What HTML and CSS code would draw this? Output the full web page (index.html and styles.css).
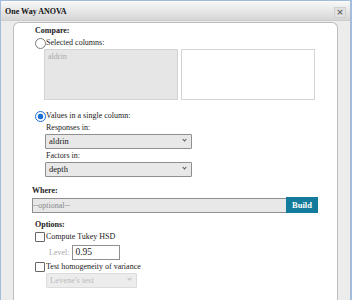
FILE: index.html
```html
<!DOCTYPE html>
<html lang="en">

<head>
    <meta charset="UTF-8">
    <title>One Way ANOVA</title>
    <link rel="stylesheet" href="styles.css">
</head>

<body>
    <div class="dialog">
        <div class="titlebar">
            <span class="title">One Way ANOVA</span>
            <span class="close">&times;</span>
        </div>
        <div class="content">
            <div class="panel">
                <div class="section compare">
                    <div class="label">Compare:</div>
                    <div class="option">
                        <span class="radio"></span>Selected columns:
                    </div>
                    <div class="lists">
                        <div class="list source">aldrin</div>
                        <div class="list target"></div>
                    </div>
                    <div class="option single">
                        <span class="radio checked"></span>Values in a single column:
                    </div>
                    <div class="sub">
                        <div class="sublabel">Responses in:</div>
                        <div class="select">aldrin<span class="chev"></span></div>
                        <div class="sublabel second">Factors in:</div>
                        <div class="select">depth<span class="chev"></span></div>
                    </div>
                </div>

                <div class="section where">
                    <div class="label">Where:</div>
                    <div class="where-row">
                        <div class="where-input">--optional--</div>
                        <button class="build">Build</button>
                    </div>
                </div>

                <div class="section options">
                    <div class="label">Options:</div>
                    <div class="option">
                        <span class="check"></span>Compute Tukey HSD
                    </div>
                    <div class="level">
                        <span class="muted">Level:</span>
                        <span class="level-input">0.95</span>
                    </div>
                    <div class="option test">
                        <span class="check"></span>Test homogeneity of variance
                    </div>
                    <div class="select disabled">Levene's test<span class="chev"></span></div>
                </div>
            </div>
        </div>
    </div>
</body>

</html>
```

FILE: styles.css
```css
* {
    margin: 0px;
    box-sizing: border-box;
}

body {
    font-family: "Liberation Serif", "Times New Roman", serif;
    font-size: 8px;
    color: #222;
    background: #fff;
}

.dialog {
    width: 352px;
    height: 300px;
    border: 1px solid #a3bcdc;
    border-right-width: 2px;
    border-bottom: none;
    overflow: hidden;
    background: #ececec;
}

.titlebar {
    height: 20px;
    display: flex;
    align-items: center;
    justify-content: space-between;
    padding: 0 4px 0 4px;
    background: linear-gradient(#f7f7f7, #d6d6d6);
    border-top: 1px solid #fafafa;
    border-bottom: 1px solid #cdcdcd;
}

.title {
    font-weight: bold;
    font-size: 8px;
    color: #111;
}

.close {
    width: 12px;
    height: 11px;
    margin-top: 2px;
    border: 1px solid #d0d0d0;
    background: #e2e2e2;
    color: #6a6a6a;
    font-family: "DejaVu Sans", sans-serif;
    font-size: 9px;
    line-height: 9px;
    text-align: center;
    font-weight: bold;
}

.content {
    height: 280px;
    padding: 1px 12px 0 12px;
}

.panel {
    height: 100%;
    background: #fff;
    border: 1px solid #bdbdbd;
    border-bottom: none;
    border-radius: 6px 6px 0 0;
    padding: 2px 6px 0 18px;
}

.label {
    font-weight: bold;
    line-height: 12px;
    padding-left: 3px;
}

.option {
    display: flex;
    align-items: center;
    line-height: 12px;
    padding-left: 3px;
}

.radio {
    width: 11px;
    height: 11px;
    border: 1px solid #7a7a7a;
    border-radius: 50%;
    background: #fff;
}

.radio.checked {
    border: 1px solid #1a6fd8;
    background: radial-gradient(circle, #1a6fd8 0 2.6px, #fff 3.1px);
}

.check {
    width: 10px;
    height: 10px;
    border: 1px solid #666;
    border-radius: 1px;
    margin-right: 1px;
    background: #fff;
}

.lists {
    display: flex;
    gap: 3px;
    padding-left: 12px;
}

.list {
    width: 134px;
    height: 51px;
    border: 1px solid #d4d4d4;
    padding: 2px 3px;
    line-height: 10px;
}

.list.source {
    background: #e6e6e6;
    color: #aaa;
}

.list.target {
    background: #fff;
}

.single {
    margin-top: 10px;
}

.sub {
    padding-left: 13px;
}

.sublabel {
    line-height: 11px;
    padding-left: 1px;
    margin-bottom: 1px;
}

.sublabel.second {
    margin-top: 1px;
}

.select {
    position: relative;
    width: 147px;
    height: 15px;
    border: 1px solid #8f8f8f;
    border-radius: 1px;
    background: #e8e8e8;
    padding: 0 3px;
    line-height: 13px;
    font-size: 8.5px;
}

.chev {
    position: absolute;
    right: 5px;
    top: 3px;
    width: 3px;
    height: 3px;
    border-right: 1px solid #555;
    border-bottom: 1px solid #555;
    transform: rotate(45deg);
}

.where {
    margin-top: 8px;
}

.where .label {
    padding-left: 0;
}

.where-row {
    display: flex;
    align-items: center;
}

.where-input {
    width: 254px;
    height: 15px;
    border: 1px solid #8f8f8f;
    border-right: none;
    background: #e8e8e8;
    color: #888;
    line-height: 13px;
    padding-left: 0px;
}

.build {
    width: 32px;
    height: 16px;
    border: none;
    background: #137c9c;
    color: #fff;
    font-family: "Liberation Serif", "Times New Roman", serif;
    font-weight: bold;
    font-size: 8.5px;
    padding: 0;
}

.options {
    margin-top: 6px;
}

.level {
    display: flex;
    align-items: center;
    padding-left: 17px;
    gap: 3px;
    margin-top: 2px;
}

.muted {
    color: #aaa;
}

.level-input {
    width: 48px;
    height: 15px;
    border: 1px solid #8f8f8f;
    padding-left: 2px;
    line-height: 13px;
    font-size: 9.5px;
}

.option.test {
    margin-top: 1px;
}

.select.disabled {
    width: 91px;
    margin-left: 14px;
    border-color: #dcdcdc;
    background: #ececec;
    color: #bbb;
}

.select.disabled .chev {
    border-color: #bbb;
}
```
